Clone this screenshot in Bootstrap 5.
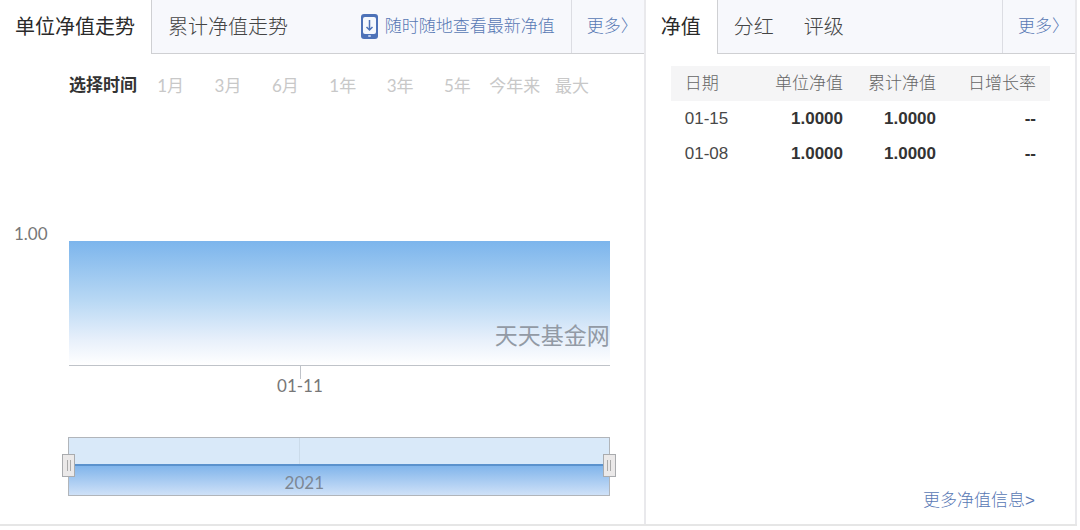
<!DOCTYPE html>
<html lang="zh-CN">
<head>
<meta charset="utf-8">
<meta name="viewport" content="width=device-width, initial-scale=1">
<title>单位净值走势</title>
<link rel="stylesheet" href="https://cdn.jsdelivr.net/npm/bootstrap@5.3.0/dist/css/bootstrap.min.css">
<style>
  body { font-family: "Liberation Sans", "Noto Sans CJK SC", sans-serif; font-size: 17px; line-height: 24px; color: #333; background: #fff; }
  a { color: #5878b4; text-decoration: none; }
  .board { min-height: 526px; margin-right: 3px; border-bottom: 2px solid #e6e6e6; }
  .panel { border-right: 2px solid #e9e9ec; min-width: 0; }
  .panel-trend { flex: 3 1 0; }
  .panel-value { flex: 2 1 0; }
  .panel-head { height: 54px; white-space: nowrap; }
  .tab-btn { border: 0; background: none; font-size: 20px; line-height: 28px; padding: 0 14px 0 16px; color: #444; font-weight: 300; }
  .tab-btn.active { color: #2a2a2a; padding: 0 16px 0 15px; font-weight: 400; }
  .strip { background: #f7f8fc; border-left: 1px solid #cfd0d3; border-bottom: 1px solid #cfd0d3; }
  .strip a { font-weight: 300; }
  .more { width: 73px; border-left: 1px solid #dcdde3; padding-left: 15px; }
  .app-link { gap: 7px; padding-right: 16px; }
  .trend-body { padding: 20px 34px 0 69px; }
  .periods { display: grid; grid-template-columns: repeat(8, 1fr); margin: 0 9px 0 5px; }
  .periods button { border: 0; background: none; padding: 0; color: #c8c8c8; font-family: Lato, "Noto Sans CJK SC", sans-serif; white-space: nowrap; }
  .chart-num { font-family: Lato, sans-serif; color: #777; }
  .plot-row { display: grid; grid-template-columns: 55px 1fr; margin: 124px 0 0 -55px; }
  .plot { height: 125px; margin-top: 19px; border-bottom: 1px solid #bfc3c9; background: linear-gradient(#7cb5ec, #b8d8f4 48%, #e8f0fb 80%, #fff); }
  .watermark { font-size: 23px; line-height: 32px; color: #929aa5; padding-bottom: 13px; }
  .x-axis { height: 71px; }
  .x-tick { left: 42.7%; width: 1px; height: 13px; background: #bfc3c9; }
  .x-label { left: 42.7%; top: 8px; }
  .navigator { height: 59px; margin-left: -1px; border: 1px solid #b1b5ba; background: #d9e9f9; }
  .nav-area { height: 31px; border-top: 2px solid #5b92cd; background: linear-gradient(#81b5eb, #cfe1f8); }
  .nav-grid { left: 42.7%; width: 1px; height: 26px; background: #cbdbea; }
  .nav-label { left: 43.6%; bottom: 0; color: #7c8795; }
  .handle { appearance: none; left: -7px; width: calc(100% + 14px); top: 16px; height: 23px; margin: 0; background: transparent; pointer-events: none; }
  .handle::-webkit-slider-runnable-track { height: 23px; background: transparent; }
  .handle::-webkit-slider-thumb { appearance: none; pointer-events: auto; width: 13px; height: 23px; border: 1px solid #a9abae; background: linear-gradient(90deg, #aaa 1px, transparent 1px 3px, #aaa 3px 4px) center / 4px 11px no-repeat, #ebe9e9; }
  .value-body { padding: 12px 25px 0; }
  .value-table { width: 100%; table-layout: fixed; }
  .value-table th, .value-table td { height: 35px; padding: 0 14px 0 0; text-align: right; white-space: nowrap; }
  .value-table thead th { font-weight: 300; color: #666; background: #f5f5f6; }
  .value-table tbody th { font-weight: 400; color: #484848; }
  .value-table tbody td { font-weight: 700; }
  .value-table th:first-child { text-align: left; padding-left: 14px; }
  .col-mid { width: 93px; }
  .col-end { width: 100px; }
  .all-link { padding: 0 40px 11px; font-weight: 300; }
</style>
</head>
<body>
<main class="board d-flex">
  <section class="panel panel-trend">
    <div class="panel-head d-flex">
      <button type="button" class="tab-btn active">单位净值走势</button>
      <div class="strip d-flex flex-grow-1">
        <button type="button" class="tab-btn">累计净值走势</button>
        <a href="#" class="app-link d-flex align-items-center ms-auto">
          <svg width="17" height="26" viewBox="0 0 17 26" aria-hidden="true">
            <rect x="0" y="0" width="17" height="25" rx="3" fill="#4d72b8"/>
            <rect x="2" y="3" width="13" height="17" rx="2" fill="#f5f8fd"/>
            <path d="M8.500 6V16M5.500 13l3 3 3-3" fill="none" stroke="#4d72b8" stroke-width="1.500"/>
            <rect x="7" y="21" width="3" height="2" rx="1" fill="#b9cdf0"/>
          </svg>
          <span>随时随地查看最新净值</span>
        </a>
        <a href="#" class="more d-flex align-items-center">更多〉</a>
      </div>
    </div>
    <div class="trend-body">
      <div class="d-flex">
        <strong class="text-nowrap">选择时间</strong>
        <div class="periods flex-grow-1">
          <button type="button">1月</button>
          <button type="button">3月</button>
          <button type="button">6月</button>
          <button type="button">1年</button>
          <button type="button">3年</button>
          <button type="button">5年</button>
          <button type="button">今年来</button>
          <button type="button">最大</button>
        </div>
      </div>
      <div class="plot-row">
        <span class="chart-num">1.00</span>
        <div class="plot d-flex justify-content-end align-items-end"><span class="watermark">天天基金网</span></div>
      </div>
      <div class="x-axis position-relative">
        <span class="x-tick position-absolute top-0"></span>
        <span class="x-label chart-num position-absolute translate-middle-x">01-11</span>
      </div>
      <div class="navigator position-relative d-flex flex-column justify-content-end">
        <span class="nav-grid position-absolute top-0"></span>
        <div class="nav-area"></div>
        <span class="nav-label chart-num position-absolute translate-middle-x">2021</span>
        <input type="range" class="handle position-absolute" min="0" max="100" value="0" aria-label="开始时间">
        <input type="range" class="handle position-absolute" min="0" max="100" value="100" aria-label="结束时间">
      </div>
    </div>
  </section>
  <section class="panel panel-value d-flex flex-column">
    <div class="panel-head d-flex">
      <button type="button" class="tab-btn active">净值</button>
      <div class="strip d-flex flex-grow-1">
        <button type="button" class="tab-btn">分红</button>
        <button type="button" class="tab-btn">评级</button>
        <a href="#" class="more d-flex align-items-center ms-auto">更多〉</a>
      </div>
    </div>
    <div class="value-body">
      <table class="value-table">
        <colgroup><col><col><col class="col-mid"><col class="col-end"></colgroup>
        <thead><tr><th scope="col">日期</th><th scope="col">单位净值</th><th scope="col">累计净值</th><th scope="col">日增长率</th></tr></thead>
        <tbody>
          <tr><th scope="row">01-15</th><td>1.0000</td><td>1.0000</td><td>--</td></tr>
          <tr><th scope="row">01-08</th><td>1.0000</td><td>1.0000</td><td>--</td></tr>
        </tbody>
      </table>
    </div>
    <a href="#" class="all-link mt-auto ms-auto">更多净值信息&gt;</a>
  </section>
</main>
<script src="https://cdn.jsdelivr.net/npm/bootstrap@5.3.0/dist/js/bootstrap.bundle.min.js"></script>
</body>
</html>
